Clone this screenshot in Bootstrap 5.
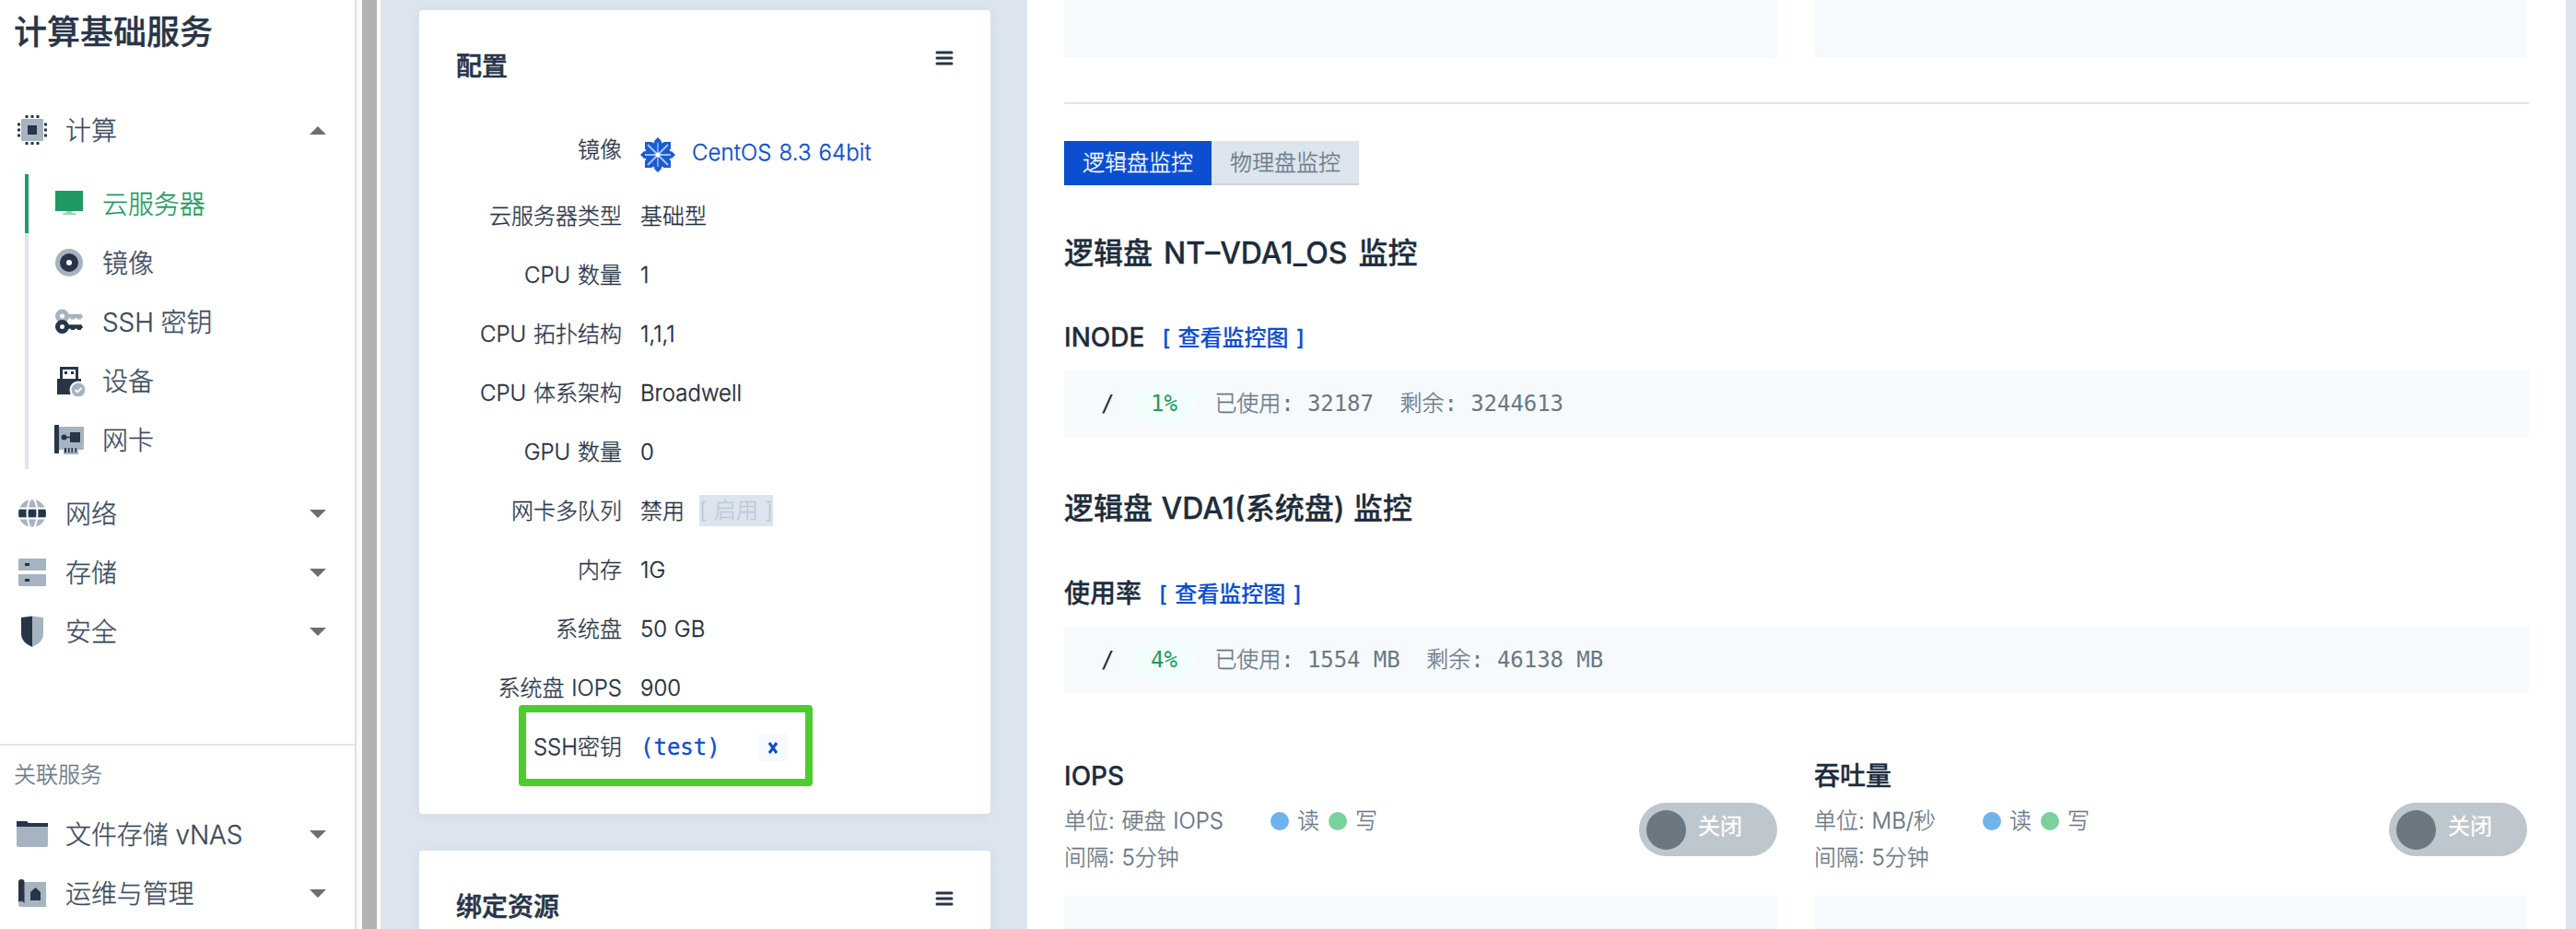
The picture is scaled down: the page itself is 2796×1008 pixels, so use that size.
<!DOCTYPE html>
<html lang="zh-CN">
<head>
<meta charset="utf-8">
<title>计算基础服务</title>
<link href="https://cdn.jsdelivr.net/npm/bootstrap@5.3.0/dist/css/bootstrap.min.css" rel="stylesheet">
<style>
:root{--ink:#283548;--soft:#a6b3c1;--blue:#0b4fd0;--line:#dce5ee;--muted:#697784}
html,body{height:1008px;overflow:hidden}
body{font-family:Inter,"Noto Sans CJK SC",sans-serif;font-weight:300;-webkit-text-stroke:.3px currentColor;background:#dce5ee;color:var(--ink);font-size:24px;line-height:36px}
.side{width:387px;background:#fff;border-right:2px solid #e0e0e0;overflow:hidden}
.side-title{font-size:36px;font-weight:500;-webkit-text-stroke:.3px currentColor;line-height:54px;padding:8px 0 0 15px;height:109px;margin:0}
.side-row{height:64px;padding:0 31px 0 18px;font-size:28px;color:#3b4a5d}
.side-row span{padding-top:1px;letter-spacing:-.1px}
.side-row svg{flex:none}
.side-row .ico{width:34px;height:34px;margin-right:19px}
.side-sub{margin:16px 0 16px 27px;border-left:4px solid var(--line)}
.side-sub .side-row{padding-left:27px;margin-left:-4px;border-left:4px solid transparent}
.side-sub .side-row.on{border-color:#1e9a62;color:#1e9a62}
.side-rel{border-top:2px solid var(--line);margin-top:90px;padding-top:14px}
.side-rel .cap{font-size:24px;color:var(--muted);padding-left:15px;line-height:36px;height:50px}
.track{width:28px;background:#fafafa;border-right:2px solid #e6e6e6;padding-left:6px}
.track div{width:16px;background:#b2b2b2;height:100%}
.cards{width:700px;padding:11px 40px 0}
.box{background:#fff;border-radius:4px;box-shadow:0 2px 12px rgba(90,110,150,.08);padding:40px}
.box.one{height:872px}
.box.two{height:120px;margin-top:40px}
.box h2{font-size:28px;font-weight:500;-webkit-text-stroke:.6px currentColor;line-height:42px;margin:0}
.box .menu{margin-top:2px}
.kv{height:64px;word-spacing:1px}
.kv.first{height:71px;margin-top:39px;padding-bottom:6px}
.kv.first dt{padding-bottom:3px}
.kv.first dd{padding-top:3px;letter-spacing:.1px}
.kv.first dd svg{margin-top:3px;margin-right:18px}
.kv dt{width:180px;text-align:right;margin-right:20px;font-weight:inherit;white-space:nowrap}
.kv dd{margin:0;white-space:nowrap;color:#1d2c3c}
.kv dd.blue{color:var(--blue)}
.dis{background:#dce5ee;color:#bccad8;height:34px;line-height:34px;margin-left:16px;width:80px;text-align:center}
.mono{font-family:"DejaVu Sans Mono","Noto Sans CJK SC",monospace}
.mono span{-webkit-text-stroke:0}
.mono .zh{-webkit-text-stroke:.3px currentColor}
.xbtn{width:32px;height:30px;border-radius:4px;background:#f6f9fd;margin-left:41px}
.hl{position:absolute;left:563px;top:765px;width:319px;height:88px;border:8px solid #4ccd2d;border-radius:4px}
.main{width:1670px;background:#fff;padding:0 40px}
.pair{gap:40px}
.plot{background:#f6fafd;width:774px;height:63px}
.rule{height:2px;background:var(--line);margin-top:48px}
.tabz{margin-top:40px;height:48px}
.tabz button{width:160px;height:48px;border:0;font-size:24px;font-weight:300;-webkit-text-stroke:.3px currentColor;line-height:46px;padding:1px 0 0;background:#dce5ee;color:var(--muted);border-bottom:2px solid #d0d3d6}
.tabz button.on{background:var(--blue);color:#fff;border-color:var(--blue)}
.main h3{font-size:32px;font-weight:500;-webkit-text-stroke:.3px currentColor;word-spacing:3.500px;line-height:48px;margin:50px 0 0;color:#1d2c3c}
.main h3.sys{margin-top:54px;word-spacing:1px}
.main h4{font-size:28px;font-weight:500;-webkit-text-stroke:.3px currentColor;line-height:42px;margin:0;color:#1d2c3c}
.sub{margin-top:46px}
.sub.s2{margin-top:47px}
.lnk{font-size:24px;font-weight:500;-webkit-text-stroke:.2px currentColor;color:var(--blue);margin-left:19px;word-spacing:2px;padding-top:2px}
.usage{background:#f6fafd;height:72px;margin-top:15px;padding-left:40px;color:var(--muted);white-space:pre;letter-spacing:-.07px}
.usage .pth{color:#1d2c3c}
.pct{width:68px;height:40px;border-radius:20px;background:#f2fefb;color:#1e9a62;display:flex;align-items:center;justify-content:center;margin:0 21px 0 20px}
.stats{margin-top:69px}
.stat{width:774px}
.meta{color:var(--muted);line-height:40px;height:109px;word-spacing:1px}
.dot{width:20px;height:20px;border-radius:50%;margin-right:9px}
.rd{background:#70b3ec;margin-left:51px}
.wr{background:#7bd19e;margin-left:10px}
.sw{width:150px;height:58px;border-radius:29px;background:#bec6ce;color:#fff;padding-left:8px}
.sw i{width:43px;height:43px;border-radius:50%;background:#6c7881;margin-right:13px}
.sw span{padding-bottom:6px;font-weight:400}
</style>
<script src="https://cdn.jsdelivr.net/npm/bootstrap@5.3.0/dist/js/bootstrap.bundle.min.js"></script>
</head>
<body>
<div class="d-flex h-100">
<nav class="side flex-shrink-0 h-100">
  <h1 class="side-title">计算基础服务</h1>
  <div class="side-row d-flex align-items-center"><svg class="ico" viewBox="0 0 34 34"><path fill="#283548" d="M9.500 1h3v4h-3zM15.500 1h3v4h-3zM21.500 1h3v4h-3zM9.500 29h3v4h-3zM15.500 29h3v4h-3zM21.500 29h3v4h-3zM1 9.500h4v3H1zM1 15.500h4v3H1zM1 21.500h4v3H1zM29 9.500h4v3h-4zM29 15.500h4v3h-4zM29 21.500h4v3h-4z"/><path fill="#fff" d="M4 4h26v26H4z"/><rect x="5" y="5" width="24" height="24" rx="1" fill="#a6b3c1"/><path fill="#283548" d="M12 12h10v10H12z"/></svg><span class="me-auto">计算</span><svg width="18" height="9"><path d="M0 9L9 0l9 9z" fill="#6e6e6e"/></svg></div>
  <div class="side-sub">
    <div class="side-row d-flex align-items-center on"><svg class="ico" viewBox="0 0 34 34"><path fill="#8fdcbc" d="M14 25h6l1 2q4 0 4 2H10q0-2 3-2z"/><path fill="#1e9a62" d="M2 3h30v22H2z"/></svg><span>云服务器</span></div>
    <div class="side-row d-flex align-items-center"><svg class="ico" viewBox="0 0 34 34"><circle cx="17" cy="17" r="15" fill="#a6b3c1"/><circle cx="17" cy="17" r="10" fill="#283548"/><circle cx="17" cy="17" r="3" fill="#fff"/></svg><span>镜像</span></div>
    <div class="side-row d-flex align-items-center"><svg class="ico" viewBox="0 0 34 34"><g fill="none" stroke="#a6b3c1"><circle cx="9.500" cy="11" r="5" stroke-width="5"/><path d="M15 11h14.500l1.500-1" stroke-width="4.500"/><path d="M19 12h4M26 12h4" stroke-width="5"/></g><g fill="none" stroke="#283548"><circle cx="9.500" cy="22.500" r="5" stroke-width="5"/><path d="M15 22.500h14.500l1.500-1" stroke-width="4.500"/><path d="M19 23.500h4M26 23.500h4" stroke-width="5"/></g></svg><span>SSH 密钥</span></div>
    <div class="side-row d-flex align-items-center"><svg class="ico" viewBox="0 0 34 34"><path fill="#283548" d="M7 2h20v13h3v17H4V15h3z"/><path fill="#fff" d="M10 5h14v10H10z"/><path fill="#283548" d="M12 7h3v3h-3zM19 7h3v3h-3z"/><circle cx="27" cy="27" r="9.500" fill="#fff"/><circle cx="27" cy="27" r="7.500" fill="#a6b3c1"/><path d="M23.500 27l2.500 2.500 4.500-4.500" stroke="#fff" stroke-width="1.800" fill="none"/></svg><span>设备</span></div>
    <div class="side-row d-flex align-items-center"><svg class="ico" viewBox="0 0 34 34"><path fill="#a6b3c1" d="M6 3h26q1 0 1 1v23q0 1-1 1h-5v5H11v-5H6z"/><path fill="#283548" d="M1 2q0-1 1-1h4v31H2q-1 0-1-1zM18 9h11v11H18zM12 26h2v5h-2zM16 26h1.500v5H16zM19.500 26H21v5h-1.500zM23.500 26H25v5h-1.500z"/><circle cx="11.500" cy="14.500" r="3" fill="#283548"/><path stroke="#283548" stroke-width="1.500" d="M12 14.500h7"/></svg><span>网卡</span></div>
  </div>
  <div class="side-row d-flex align-items-center"><svg class="ico" viewBox="0 0 34 34"><circle cx="17" cy="17" r="15" fill="#a6b3c1"/><path fill="#283548" d="M2.600 12.500h28.800q1 4.500 0 9H2.600q-1-4.500 0-9z"/><g fill="none" stroke="#fff" stroke-width="2"><ellipse cx="17" cy="17" rx="5.500" ry="16"/><path d="M1 11.500h32M1 22.500h32"/></g></svg><span class="me-auto">网络</span><svg width="18" height="9"><path d="M0 0h18L9 9z" fill="#6e6e6e"/></svg></div>
  <div class="side-row d-flex align-items-center"><svg class="ico" viewBox="0 0 34 34"><rect x="2" y="2" width="30" height="13" rx="1" fill="#a6b3c1"/><rect x="2" y="19" width="30" height="13" rx="1" fill="#a6b3c1"/><path fill="#283548" d="M9 7h5v3H9zM9 24h5v3H9z"/></svg><span class="me-auto">存储</span><svg width="18" height="9"><path d="M0 0h18L9 9z" fill="#6e6e6e"/></svg></div>
  <div class="side-row d-flex align-items-center"><svg class="ico" viewBox="0 0 34 34"><path fill="#a6b3c1" d="M17 .5L29 2v18q0 9-12 14z"/><path fill="#283548" d="M17 .5L5 2v18q0 9 12 14z"/></svg><span class="me-auto">安全</span><svg width="18" height="9"><path d="M0 0h18L9 9z" fill="#6e6e6e"/></svg></div>
  <div class="side-rel">
    <div class="cap">关联服务</div>
    <div class="side-row d-flex align-items-center"><svg class="ico" viewBox="0 0 34 34"><path fill="#a6b3c1" d="M0 6h34v23q0 2-2 2H2q-2 0-2-2z"/><path fill="#283548" d="M0 3h11l2 2h21v4H0z"/></svg><span class="me-auto">文件存储 vNAS</span><svg width="18" height="9"><path d="M0 0h18L9 9z" fill="#6e6e6e"/></svg></div>
    <div class="side-row d-flex align-items-center"><svg class="ico" viewBox="0 0 34 34"><path fill="#a6b3c1" d="M8 5h24v27H5q-3 0-3-3z"/><path fill="#283548" d="M2 5q0-3 3.300-3T8.500 5v23q-3-4-6.500-1zM15 16l5.500-5 5.500 5v9H15z"/></svg><span class="me-auto">运维与管理</span><svg width="18" height="9"><path d="M0 0h18L9 9z" fill="#6e6e6e"/></svg></div>
  </div>
</nav>
<div class="track flex-shrink-0 h-100"><div></div></div>
<section class="cards flex-shrink-0 d-flex flex-column">
  <div class="box one flex-shrink-0">
    <div class="d-flex justify-content-between"><h2>配置</h2><svg class="menu" width="20" height="20" viewBox="0 0 20 20"><path d="M2 4h16M2 10h16M2 16h16" stroke="#283548" stroke-width="3" stroke-linecap="round"/></svg></div>
    <dl class="m-0">
      <div class="kv first d-flex align-items-center"><dt>镜像</dt><dd class="blue d-flex align-items-center"><svg width="38" height="38" viewBox="-19 -19 38 38"><path fill="#1a5ad4" d="M-14-14h28v28h-28zM0-19l5 5H-5zM0 19l5-5H-5zM-19 0l5-5V5zM19 0l-5-5V5z"/><path fill="#fff" d="M-7-14.500h4l-2 2zM7-14.500H3l2 2zM-7 14.500h4l-2-2zM7 14.500H3l2-2zM-14.500-7v4l2-2zM-14.500 7V3l2 2zM14.500-7v4l-2-2zM14.500 7V3l-2 2z"/><path stroke="#a9c3f2" stroke-width="2" d="M-11-11L11 11M11-11L-11 11" fill="none"/><path stroke="#8fb0ee" stroke-width="1.600" d="M0-13V13" fill="none"/><path stroke="#fff" stroke-width="1.200" d="M-14 0H14" fill="none"/><circle r="2.500" fill="#fff"/></svg>CentOS 8.3 64bit</dd></div>
      <div class="kv d-flex align-items-center"><dt>云服务器类型</dt><dd>基础型</dd></div>
      <div class="kv d-flex align-items-center"><dt>CPU 数量</dt><dd>1</dd></div>
      <div class="kv d-flex align-items-center"><dt>CPU 拓扑结构</dt><dd>1,1,1</dd></div>
      <div class="kv d-flex align-items-center"><dt>CPU 体系架构</dt><dd>Broadwell</dd></div>
      <div class="kv d-flex align-items-center"><dt>GPU 数量</dt><dd>0</dd></div>
      <div class="kv d-flex align-items-center"><dt>网卡多队列</dt><dd class="d-flex">禁用<span class="dis">[ 启用 ]</span></dd></div>
      <div class="kv d-flex align-items-center"><dt>内存</dt><dd>1G</dd></div>
      <div class="kv d-flex align-items-center"><dt>系统盘</dt><dd>50 GB</dd></div>
      <div class="kv d-flex align-items-center"><dt>系统盘 IOPS</dt><dd>900</dd></div>
      <div class="kv d-flex align-items-center"><dt>SSH密钥</dt><dd class="d-flex align-items-center blue"><span class="mono">(test)</span><span class="xbtn d-flex align-items-center justify-content-center"><svg width="12" height="13"><path d="M2 1l8 11M10 1L2 12" stroke="#0b4fd0" stroke-width="3"/></svg></span></dd></div>
    </dl>
  </div>
  <div class="box two flex-shrink-0">
    <div class="d-flex justify-content-between"><h2>绑定资源</h2><svg class="menu" width="20" height="20" viewBox="0 0 20 20"><path d="M2 4h16M2 10h16M2 16h16" stroke="#283548" stroke-width="3" stroke-linecap="round"/></svg></div>
  </div>
</section>
<main class="main flex-shrink-0 h-100 overflow-hidden">
  <div class="pair d-flex"><div class="plot"></div><div class="plot"></div></div>
  <div class="rule"></div>
  <div class="tabz d-flex"><button class="on">逻辑盘监控</button><button>物理盘监控</button></div>
  <h3>逻辑盘 NT–VDA1_OS 监控</h3>
  <div class="sub d-flex align-items-center"><h4>INODE</h4><span class="lnk">[ 查看监控图 ]</span></div>
  <div class="usage mono d-flex align-items-center"><span class="pth">/</span><span class="pct">1%</span><span><span class="zh">已使用</span>: 32187  <span class="zh">剩余</span>: 3244613</span></div>
  <h3 class="sys">逻辑盘 VDA1(系统盘) 监控</h3>
  <div class="sub s2 d-flex align-items-center"><h4>使用率</h4><span class="lnk">[ 查看监控图 ]</span></div>
  <div class="usage mono d-flex align-items-center"><span class="pth">/</span><span class="pct">4%</span><span><span class="zh">已使用</span>: 1554 MB  <span class="zh">剩余</span>: 46138 MB</span></div>
  <div class="pair stats d-flex">
    <div class="stat"><h4>IOPS</h4>
      <div class="d-flex justify-content-between align-items-start meta pt-2"><div><div class="d-flex align-items-center"><span>单位: 硬盘 IOPS</span><span class="dot rd"></span>读<span class="dot wr"></span>写</div><div>间隔: 5分钟</div></div><div class="sw d-flex align-items-center"><i></i><span>关闭</span></div></div>
      <div class="plot"></div></div>
    <div class="stat"><h4>吞吐量</h4>
      <div class="d-flex justify-content-between align-items-start meta pt-2"><div><div class="d-flex align-items-center"><span>单位: MB/秒</span><span class="dot rd"></span>读<span class="dot wr"></span>写</div><div>间隔: 5分钟</div></div><div class="sw d-flex align-items-center"><i></i><span>关闭</span></div></div>
      <div class="plot"></div></div>
  </div>
</main>
</div>
<div class="hl"></div>
</body>
</html>
